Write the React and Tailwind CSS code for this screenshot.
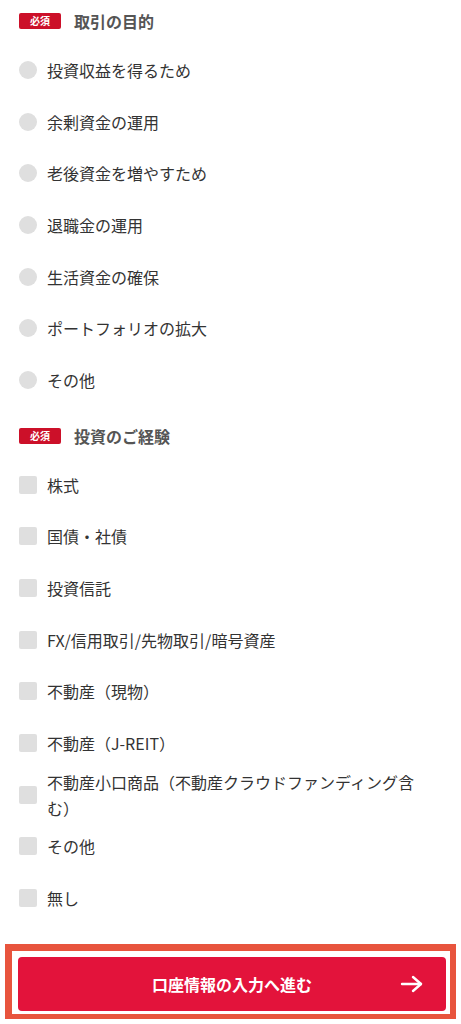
import React from "react";

const purposes = [
  "投資収益を得るため",
  "余剰資金の運用",
  "老後資金を増やすため",
  "退職金の運用",
  "生活資金の確保",
  "ポートフォリオの拡大",
  "その他",
];

const experiences = [
  "株式",
  "国債・社債",
  "投資信託",
  "FX/信用取引/先物取引/暗号資産",
  "不動産（現物）",
  "不動産（J-REIT）",
  "不動産小口商品（不動産クラウドファンディング含む）",
  "その他",
  "無し",
];

function Heading({ children, className = "" }) {
  return (
    <div className={`h-[42px] flex items-center ${className}`}>
      <span className="ml-[1px] inline-flex items-center justify-center w-[42px] h-[16px] rounded-[2px] bg-[#cc1029] text-white text-[10px] font-bold leading-none">
        必須
      </span>
      <span className="ml-[13px] text-[16px] font-bold text-[#555555] leading-[26px]">
        {children}
      </span>
    </div>
  );
}

function Row({ label, type }) {
  return (
    <label className="h-[51.7px] flex items-center">
      <span
        className={`shrink-0 ml-[1px] w-[18px] h-[18px] bg-[#dfdfdf] ${
          type === "radio" ? "rounded-full" : "rounded-[2px]"
        }`}
      />
      <span className="ml-[10px] pr-[22px] text-[16px] leading-[26px] text-[#333333]">
        {label}
      </span>
    </label>
  );
}

export default function App() {
  return (
    <div
      className="w-[461px] h-[1024px] bg-white overflow-hidden"
      style={{ fontFamily: '"Noto Sans CJK JP", "Noto Sans", sans-serif' }}
    >
      <div className="pl-[18px] pr-[18px]">
        <Heading className="mb-[2px]">取引の目的</Heading>
        <div>
          {purposes.map((p) => (
            <Row key={p} label={p} type="radio" />
          ))}
        </div>
        <Heading className="mt-[9px] mb-[2px]">投資のご経験</Heading>
        <div>
          {experiences.map((p) => (
            <Row key={p} label={p} type="checkbox" />
          ))}
        </div>
      </div>
      <div className="px-[5px] mt-[20px]">
        <div className="border-[#e8543d] border-l-[7px] border-t-[7px] border-r-[6px] border-b-[5px] pl-[6px] pr-[4px] pt-[6px] pb-[3px]">
          <button className="relative w-full h-[54px] rounded-[4px] bg-[#e3133b] flex items-center justify-center text-white text-[16px] font-bold">
            口座情報の入力へ進む
            <svg
              className="absolute right-[22px] top-1/2 -translate-y-1/2"
              width="24"
              height="20"
              viewBox="0 0 24 20"
              fill="none"
              stroke="white"
              strokeWidth="2.4"
              strokeLinecap="round"
              strokeLinejoin="round"
            >
              <path d="M2 10h19" />
              <path d="M13 3l8 7-8 7" />
            </svg>
          </button>
        </div>
      </div>
    </div>
  );
}
